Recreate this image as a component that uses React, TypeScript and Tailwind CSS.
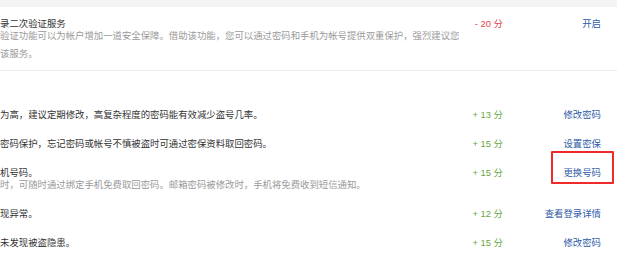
import React from 'react';

type Row = {
  title: string;
  desc?: string;
  score: string;
  action: string;
  marked?: boolean;
};

const rows: Row[] = [
  { title: '为高，建议定期修改，高复杂程度的密码能有效减少盗号几率。', score: '+ 13 分', action: '修改密码' },
  { title: '密码保护，忘记密码或帐号不慎被盗时可通过密保资料取回密码。', score: '+ 15 分', action: '设置密保' },
  {
    title: '机号码。',
    desc: '时，可随时通过绑定手机免费取回密码。邮箱密码被修改时，手机将免费收到短信通知。',
    score: '+ 15 分',
    action: '更换号码',
    marked: true,
  },
  { title: '现异常。', score: '+ 12 分', action: '查看登录详情' },
  { title: '未发现被盗隐患。', score: '+ 15 分', action: '修改密码' },
];

export default function App() {
  return (
    <div
      className="w-[620px] h-[257px] overflow-hidden bg-white text-[9.4px] text-[#333]"
      style={{ fontFamily: '"Liberation Sans", "Noto Sans CJK SC", sans-serif' }}
    >
      {/* top band */}
      <div className="h-[7px] w-[617px] bg-[#f4f4f4]"></div>

      {/* two-step verification */}
      <div className="w-[617px] flex pr-[16px] pt-[11px] pb-[7px] border-b border-[#ececec]">
        <div className="w-[466px] shrink-0 whitespace-nowrap">
          <div className="leading-[12px]">录二次验证服务</div>
          <div className="leading-[18px] -mt-[3px] text-[#9a9a9a]">
            <div>验证功能可以为帐户增加一道安全保障。借助该功能，您可以通过密码和手机为帐号提供双重保护，强烈建议您</div>
            <div>该服务。</div>
          </div>
        </div>
        <div className="w-[37px] text-right leading-[12px] text-[#e2404c]">- 20 分</div>
        <div className="flex-1 text-right leading-[12px] text-[#2f5ba8]">开启</div>
      </div>

      {/* score items */}
      <div className="w-[617px] pr-[16px] pt-[29px]">
        {rows.map((r, i) => (
          <div key={i} className="flex pt-[9px] pb-[8px]">
            <div className="w-[466px] shrink-0 whitespace-nowrap leading-[12px]">
              <div>{r.title}</div>
              {r.desc && <div className="text-[#9a9a9a]">{r.desc}</div>}
            </div>
            <div className="w-[37px] text-right leading-[12px] text-[#6aa646]">{r.score}</div>
            <div className="flex-1 text-right leading-[12px] text-[#2f5ba8]">
              <span className="relative">
                {r.action}
                {r.marked && (
                  <span className="absolute -left-[12px] -right-[13px] -top-[16px] -bottom-[6px] border-2 border-[#ee2a2a] rounded-[1px]"></span>
                )}
              </span>
            </div>
          </div>
        ))}
      </div>
    </div>
  );
}
